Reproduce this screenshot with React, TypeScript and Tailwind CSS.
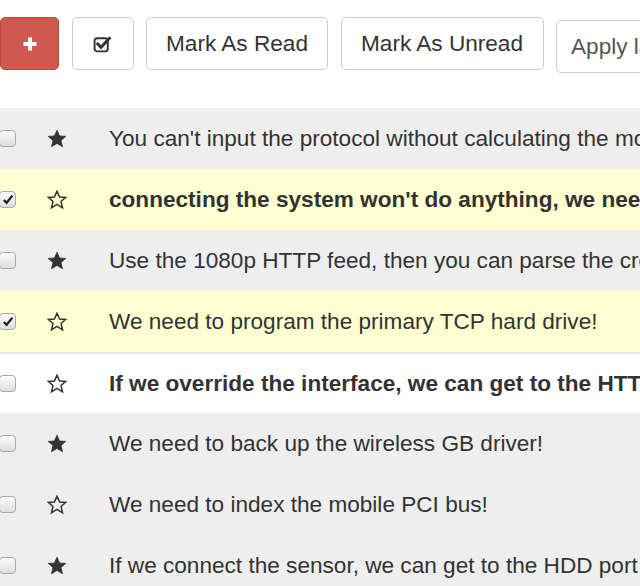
import React from "react";

const rows = [
  { text: "You can't input the protocol without calculating the mobile SSL matrix!", starred: true, checked: false, bold: false, bg: "bg-[#eeeeee]" },
  { text: "connecting the system won't do anything, we need to copy the bluetooth AGP bus!", starred: false, checked: true, bold: true, bg: "bg-[#ffffd2]" },
  { text: "Use the 1080p HTTP feed, then you can parse the cross-platform hard drive!", starred: true, checked: false, bold: false, bg: "bg-[#eeeeee]" },
  { text: "We need to program the primary TCP hard drive!", starred: false, checked: true, bold: false, bg: "bg-[#ffffd2]" },
  { text: "If we override the interface, we can get to the HTTP feed through the virtual EXE interface!", starred: false, checked: false, bold: true, bg: "bg-white border-t-2 border-[#e6e6e6]" },
  { text: "We need to back up the wireless GB driver!", starred: true, checked: false, bold: false, bg: "bg-[#eeeeee]" },
  { text: "We need to index the mobile PCI bus!", starred: false, checked: false, bold: false, bg: "bg-[#eeeeee]" },
  { text: "If we connect the sensor, we can get to the HDD port through the redundant IB firewall!", starred: true, checked: false, bold: false, bg: "bg-[#eeeeee]" },
];

function StarIcon({ filled }: { filled: boolean }) {
  const pts = "10,1.2 12.6,7 18.8,7.4 14,11.5 15.5,17.8 10,14.4 4.5,17.8 6,11.5 1.2,7.4 7.4,7";
  return (
    <svg width="20" height="19" viewBox="0 0 20 19" className="shrink-0">
      {filled ? (
        <polygon points={pts} fill="#333" stroke="#333" strokeWidth="0.8" strokeLinejoin="round" />
      ) : (
        <polygon points={pts} fill="none" stroke="#333" strokeWidth="1.5" strokeLinejoin="miter" />
      )}
    </svg>
  );
}

function CheckSquareIcon() {
  return (
    <svg width="19" height="19" viewBox="0 0 18 18" className="shrink-0">
      <rect x="1.5" y="4" width="12.5" height="12.5" rx="2.5" fill="none" stroke="#333" strokeWidth="1.8" />
      <path d="M4.5 9.5 L7.6 12.6 L15.5 4" fill="none" stroke="#333" strokeWidth="2.8" strokeLinecap="square" />
    </svg>
  );
}

function Box({ checked }: { checked: boolean }) {
  return (
    <div className="w-[17px] h-[17px] rounded-[4px] border border-[#a9a9a9] bg-gradient-to-b from-[#fbfbfb] to-[#dedede] flex items-center justify-center shadow-[inset_0_1px_0_#fff]">
      {checked && (
        <svg width="12" height="11" viewBox="0 0 12 11">
          <path d="M1.8 6 L4.6 8.8 L10.4 1.6" fill="none" stroke="#222" strokeWidth="2.2" />
        </svg>
      )}
    </div>
  );
}

export default function App() {
  return (
    <div className="w-[640px] h-[586px] overflow-hidden bg-white text-[#333] font-['Liberation_Sans',Arial,sans-serif]">
      <div className="flex items-start gap-[12.5px] pt-[17px] h-[108px] whitespace-nowrap">
        <button className="w-[59px] h-[53px] shrink-0 rounded-[5px] bg-[#d0594f] border border-[#c0473e] flex items-center justify-center">
          <svg width="16" height="16" viewBox="0 0 16 16">
            <path d="M8 1.5 V14.5 M1.5 8 H14.5" stroke="#fff" strokeWidth="4" />
          </svg>
        </button>
        <button className="w-[62px] h-[53px] shrink-0 rounded-[5px] bg-white border border-[#cccccc] flex items-center justify-center">
          <CheckSquareIcon />
        </button>
        <button className="w-[182px] h-[53px] shrink-0 rounded-[5px] bg-white border border-[#cccccc] text-[22.6px] text-[#333]">
          Mark As Read
        </button>
        <button className="w-[203px] h-[53px] shrink-0 rounded-[5px] bg-white border border-[#cccccc] text-[22.6px] text-[#333]">
          Mark As Unread
        </button>
        <div className="mt-[3px] w-[180px] h-[53px] shrink-0 rounded-[5px] bg-white border border-[#cccccc] text-[22.6px] text-[#555] flex items-center pl-[14px]">
          Apply labels
        </div>
      </div>

      <div>
        {rows.map((r, i) => (
          <div key={i} className={`h-[61px] flex items-center whitespace-nowrap ${r.bg}`}>
            <div className="ml-[-1px] w-[18px] shrink-0">
              <Box checked={r.checked} />
            </div>
            <div className="ml-[30px] w-[62px] shrink-0 flex">
              <StarIcon filled={r.starred} />
            </div>
            <span className={`text-[22.6px] ${r.bold ? "font-bold" : ""}`}>{r.text}</span>
          </div>
        ))}
      </div>
    </div>
  );
}
